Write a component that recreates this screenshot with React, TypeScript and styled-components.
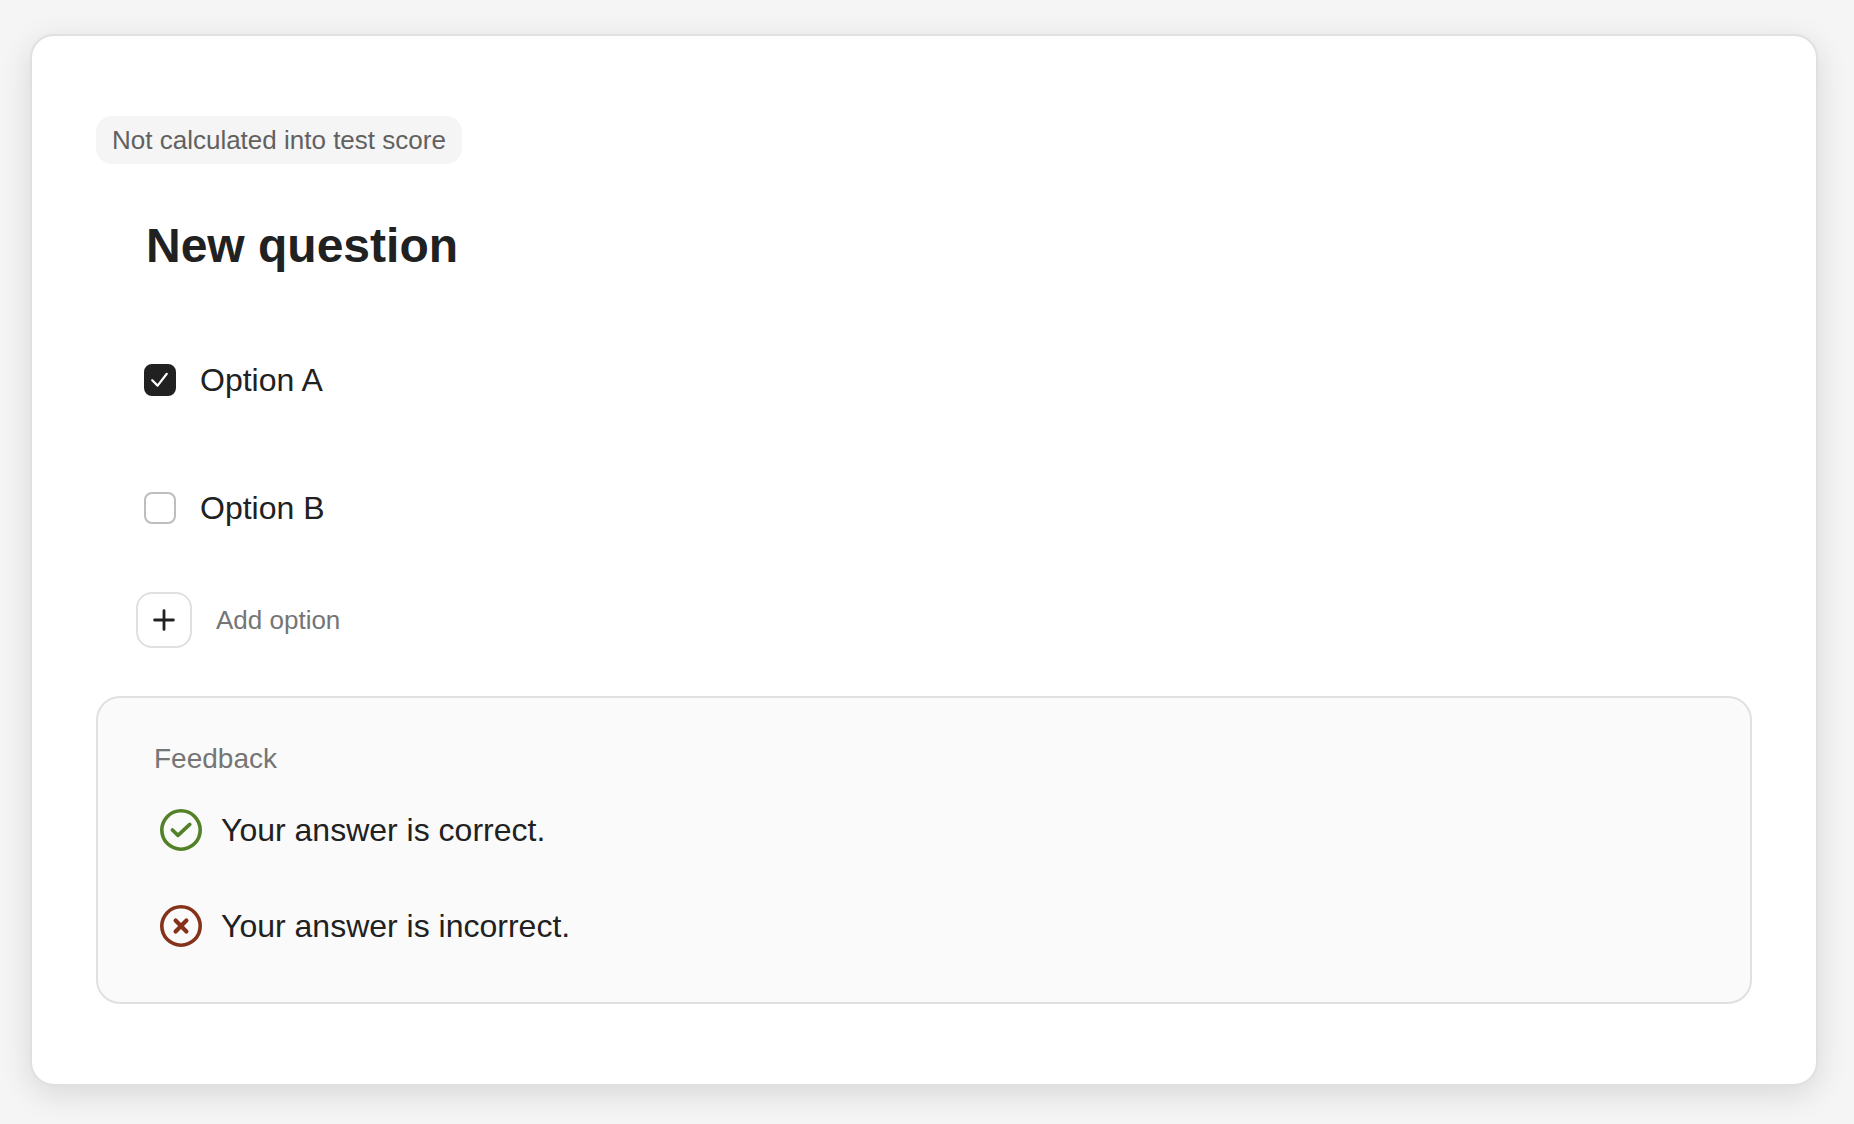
import React, { useState } from "react";
import styled, { createGlobalStyle } from "styled-components";

const GlobalStyle = createGlobalStyle`
  *, *::before, *::after { box-sizing: border-box; }
  body {
    margin: 0;
    background: #f5f5f5;
    color: #212121;
    font-family: "Liberation Sans", Arial, Helvetica, sans-serif;
  }
`;

const Page = styled.main`
  padding: 34px 36px 38px 30px;
`;

const Card = styled.section`
  padding: 80px 64px;
  background: #ffffff;
  border: 2px solid #e0e0e0;
  border-radius: 24px;
  box-shadow: 0 8px 32px rgba(0, 0, 0, 0.12);
`;

const Badge = styled.div`
  width: fit-content;
  padding: 0 16px;
  border-radius: 16px;
  background: #f5f5f5;
  color: #616161;
  font-size: 26px;
  line-height: 48px;
`;

const Title = styled.h1`
  margin: 48px 0 36px;
  padding-left: 50px;
  font-size: 48px;
  font-weight: 700;
  line-height: 68px;
`;

const OptionList = styled.ul`
  margin: 0 0 20px;
  padding: 0 0 0 48px;
  list-style: none;
`;

const OptionRow = styled.li`
  display: flex;
  align-items: center;
  height: 128px;
`;

const OptionLabel = styled.label`
  display: flex;
  align-items: center;
  gap: 24px;
  font-size: 32px;
  line-height: 48px;
  cursor: pointer;
`;

const TickBox = styled.span`
  display: grid;
  width: 32px;
  height: 32px;

  & > * { grid-area: 1 / 1; }
  & > svg { pointer-events: none; }
`;

const TickInput = styled.input`
  appearance: none;
  width: 32px;
  height: 32px;
  margin: 0;
  border: 2px solid #bdbdbd;
  border-radius: 8px;
  background: #ffffff;
  cursor: pointer;

  &:checked {
    border-color: #212121;
    background: #212121;
  }
`;

const AddRow = styled.div`
  display: flex;
  align-items: center;
  gap: 24px;
  margin-bottom: 48px;
  padding-left: 40px;
`;

const AddButton = styled.button`
  display: grid;
  place-items: center;
  width: 56px;
  height: 56px;
  padding: 0;
  border: 2px solid #e0e0e0;
  border-radius: 16px;
  background: #ffffff;
  color: #212121;
  cursor: pointer;
`;

const AddLabel = styled.label`
  color: #757575;
  font-size: 26px;
  line-height: 40px;
  cursor: pointer;
`;

const Feedback = styled.section`
  padding: 40px 56px 28px;
  border: 2px solid #e0e0e0;
  border-radius: 24px;
  background: #fafafa;
`;

const FeedbackTitle = styled.h2`
  margin: 0 0 2px;
  color: #757575;
  font-size: 28px;
  font-weight: 400;
  line-height: 42px;
`;

const FeedbackRow = styled.div<{ $tone: string }>`
  display: flex;
  align-items: center;
  gap: 16px;
  height: 96px;
  padding-left: 3px;

  & > svg { color: ${(p) => p.$tone}; }
`;

const FeedbackText = styled.p`
  margin: 0;
  font-size: 32px;
  line-height: 48px;
`;

const stroke = {
  fill: "none",
  stroke: "currentColor",
  strokeLinecap: "round" as const,
  strokeLinejoin: "round" as const,
  "aria-hidden": true,
};

function Option({ text, initial }: { text: string; initial: boolean }) {
  const [checked, setChecked] = useState(initial);
  return (
    <OptionRow>
      <OptionLabel>
        <TickBox>
          <TickInput type="checkbox" checked={checked} onChange={(e) => setChecked(e.target.checked)} />
          {checked && (
            <svg width="32" height="32" viewBox="0 0 32 32" {...stroke} stroke="#ffffff" strokeWidth="2.2">
              <path d="M8.2 16.2 L13.6 21.6 L22.8 9.8" />
            </svg>
          )}
        </TickBox>
        {text}
      </OptionLabel>
    </OptionRow>
  );
}

export default function App() {
  const [options, setOptions] = useState(["A", "B"]);
  const addOption = () =>
    setOptions((list) => [...list, String.fromCharCode(65 + list.length)]);

  return (
    <>
      <GlobalStyle />
      <Page>
        <Card>
          <Badge>Not calculated into test score</Badge>
          <Title>New question</Title>
          <OptionList>
            {options.map((name, i) => (
              <Option key={name} text={`Option ${name}`} initial={i === 0} />
            ))}
          </OptionList>
          <AddRow>
            <AddButton id="add-option" type="button" onClick={addOption}>
              <svg width="24" height="24" viewBox="0 0 24 24" {...stroke} strokeWidth="2.8">
                <path d="M12 2.6 V21.4 M2.6 12 H21.4" />
              </svg>
            </AddButton>
            <AddLabel htmlFor="add-option">Add option</AddLabel>
          </AddRow>
          <Feedback>
            <FeedbackTitle>Feedback</FeedbackTitle>
            <FeedbackRow $tone="#528128">
              <svg width="48" height="48" viewBox="0 0 48 48" {...stroke} strokeWidth="3.6">
                <circle cx="24" cy="24" r="19.2" />
                <path d="M15.4 24 L21 29.4 L32.8 18.4" />
              </svg>
              <FeedbackText>Your answer is correct.</FeedbackText>
            </FeedbackRow>
            <FeedbackRow $tone="#85321a">
              <svg width="48" height="48" viewBox="0 0 48 48" {...stroke} strokeWidth="3.6">
                <circle cx="24" cy="24" r="19.2" />
                <path d="M18.6 18.6 L29.4 29.4 M29.4 18.6 L18.6 29.4" strokeWidth="4.2" />
              </svg>
              <FeedbackText>Your answer is incorrect.</FeedbackText>
            </FeedbackRow>
          </Feedback>
        </Card>
      </Page>
    </>
  );
}
